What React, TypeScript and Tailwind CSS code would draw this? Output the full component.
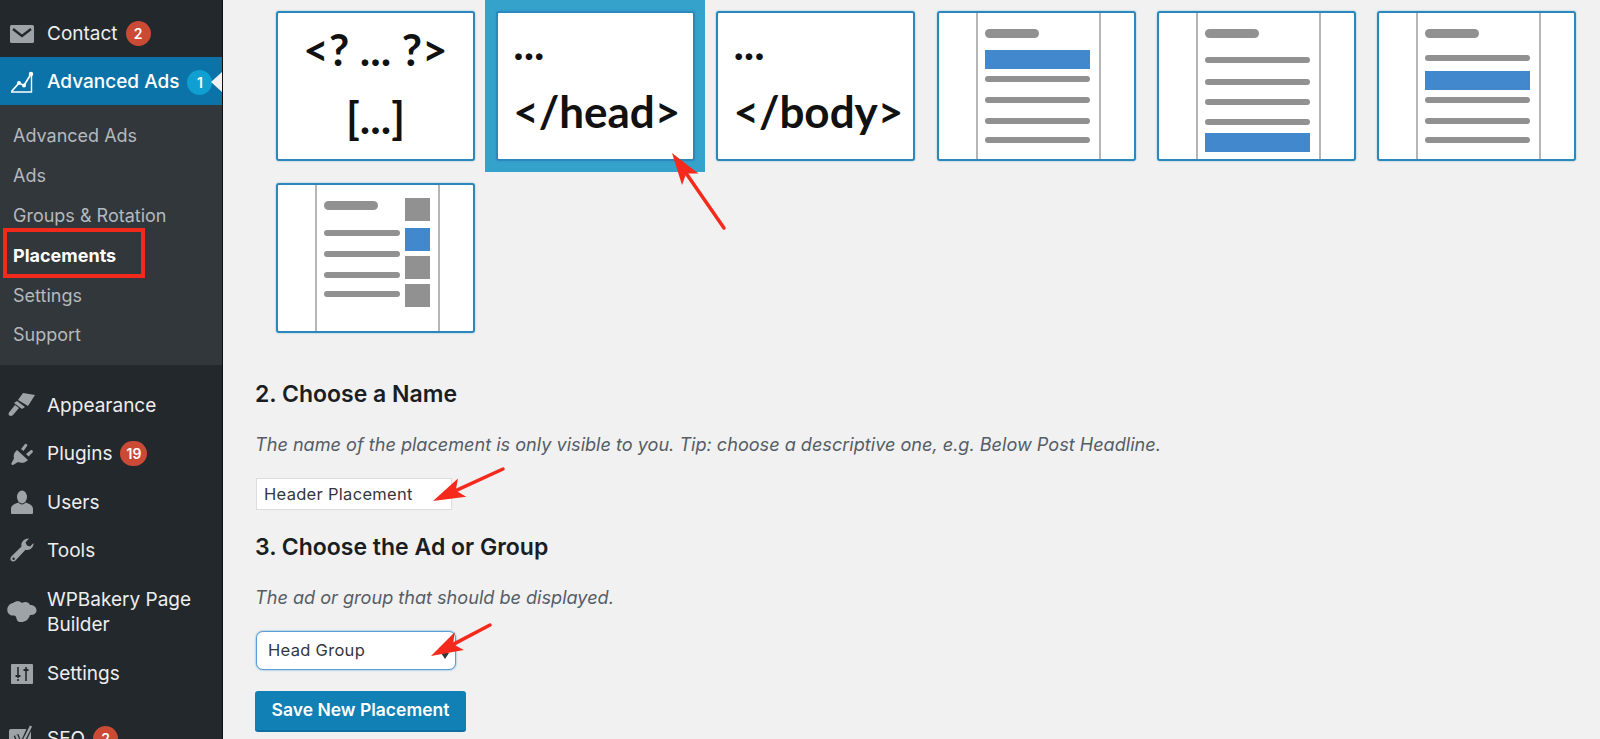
const SANS = "font-['Inter','Liberation_Sans',sans-serif]"

function Envelope() {
  return (
    <svg viewBox="0 0 24 18" className="w-6 h-[18px]">
      <rect x="0" y="0" width="24" height="18" rx="1.5" fill="#9ea3a8" />
      <path d="M3 4 L12 11 L21 4" fill="none" stroke="#23282d" strokeWidth="2.4" />
    </svg>
  )
}

function ChartIcon() {
  return (
    <svg viewBox="0 0 24 24" className="w-6 h-6" fill="none" stroke="#fff" strokeWidth="1.4">
      <path d="M21.5 3 V22 H1" />
      <path d="M1.5 21.5 L9 13 L14 15.5 L21 4" strokeWidth="1.7" />
      <circle cx="9" cy="13" r="1.3" fill="#fff" />
      <circle cx="14" cy="15.5" r="1.3" fill="#fff" />
      <circle cx="21" cy="4" r="1.5" fill="#fff" />
    </svg>
  )
}

function Brush() {
  return (
    <svg viewBox="0 0 28 24" className="w-7 h-6" fill="#9ea3a8">
      <path d="M15 0 L27 2 L20 13 L10 7 Z" />
      <path d="M9 8 L17 14 L14 16 L6 10 Z" />
      <path d="M7 12 L11 15 L5 22 C3.5 23.5 1 23 0.6 21.5 C0.3 20.5 1 19.4 1.6 18.8 Z" />
    </svg>
  )
}

function Plug() {
  return (
    <svg viewBox="0 0 24 24" className="w-6 h-6" fill="#9ea3a8">
      <path d="M7 8 L18 18 C15 21 11 21.5 8 20 L3 23 C1.5 23.3 1 22 1.5 21 L4 16.5 C3 13.5 4 10.5 7 8 Z" />
      <path d="M11 7 L15 2 C16 1 18 2.5 17 4 L13.5 9 Z" />
      <path d="M16 12 L21 8 C22.5 7.5 23.5 9.5 22.5 10.5 L18.5 14.5 Z" />
    </svg>
  )
}

function User() {
  return (
    <svg viewBox="0 0 22 24" className="w-[22px] h-6" fill="#9ea3a8">
      <ellipse cx="11" cy="7" rx="5" ry="6.5" />
      <path d="M0 19 C0 15 4 13.5 7.5 12.5 C9 15 13 15 14.5 12.5 C18 13.5 22 15 22 19 V23 C22 23.5 21.5 24 21 24 H1 C0.5 24 0 23.5 0 23 Z" />
    </svg>
  )
}

function Wrench() {
  return (
    <svg viewBox="0 0 24 24" className="w-6 h-6" fill="#9ea3a8">
      <path d="M23.5 5 C24 9 20 13 15.5 11.8 L5.5 22.5 C4 24 1 23.8 0.5 21.5 C0.2 20 1 19 1.8 18 L11.5 8.5 C10.5 4 14.5 0 19 0.5 L15.5 4.5 L17 7.5 L20 8.5 Z" />
      <circle cx="3.6" cy="20.8" r="1.2" fill="#23282d" />
    </svg>
  )
}

function Cloud() {
  return (
    <svg viewBox="0 0 30 22" className="w-[30px] h-[22px]" fill="#9ea3a8">
      <path d="M6 2 C9 -0.5 13 0 15 2 C18 0 22 1 23 4 C26 3.5 30 6 29.5 10 C29 13 26 14.5 23 14 C22 17 20 20 17 20.5 C15 21.5 11 21.5 10 19 C9 16.5 9.5 15 7 14.5 C3 15 0 12 0.3 8.5 C0.5 5 3 2.5 6 2 Z" />
    </svg>
  )
}

function Sliders() {
  return (
    <svg viewBox="0 0 22 20" className="w-[22px] h-5">
      <rect width="22" height="20" rx="1" fill="#9ea3a8" />
      <path d="M7 3 V14 M7 17 V15 M15 17 V7 M15 3 V5" stroke="#23282d" strokeWidth="1.6" />
      <path d="M4.5 12 H9.5 M12.5 6 H17.5" stroke="#23282d" strokeWidth="1.8" />
    </svg>
  )
}

function Seo() {
  return (
    <svg viewBox="0 0 26 26" className="w-[26px] h-[26px]">
      <rect x="0" y="4" width="22" height="22" rx="2" fill="#9ea3a8" />
      <path d="M7 10 L12 22 L22 0" fill="none" stroke="#23282d" strokeWidth="5" />
      <path d="M7 10 L12 21 L22 1" fill="none" stroke="#9ea3a8" strokeWidth="2.4" />
    </svg>
  )
}

function Badge({ n, color = 'bg-[#ca4a36]' }: { n: string; color?: string }) {
  return (
    <span className={`ml-2 h-[25px] min-w-[25px] px-[6px] rounded-full ${color} text-white text-[14px] font-semibold flex items-center justify-center`}>
      {n}
    </span>
  )
}

function MenuItem({ icon, label, badge, className = 'h-12' }: { icon: React.ReactNode; label: React.ReactNode; badge?: string; className?: string }) {
  return (
    <div className={`flex items-center text-[#eeeeee] text-[19px] leading-[25px] ${className}`}>
      <div className="w-[47px] shrink-0 flex justify-center pr-[3px]">{icon}</div>
      <span>{label}</span>
      {badge && <Badge n={badge} />}
    </div>
  )
}

function SubItem({ label, active }: { label: string; active?: boolean }) {
  return (
    <div className={`h-[39.8px] pl-[13px] flex items-center text-[18px] ${active ? 'text-white font-bold' : 'text-[#b4b9be]'}`}>
      {label}
    </div>
  )
}

function Sidebar() {
  return (
    <aside className="w-[223px] shrink-0 h-[739px] overflow-hidden bg-[#23282d] border-r border-[#111]">
      <MenuItem icon={<Envelope />} label="Contact" badge="2" className="h-[57px] pt-[10px]" />
      <div className="relative h-12 pt-[2px] bg-[#0c73a8] flex items-center text-white text-[19px] font-medium">
        <div className="w-[47px] shrink-0 flex justify-center pr-[3px]"><ChartIcon /></div>
        <span>Advanced Ads</span>
        <Badge n="1" color="bg-[#0f9fd0]" />
        <span className="absolute right-0 top-[15px] w-0 h-0 border-y-[10px] border-y-transparent border-r-[11px] border-r-[#f1f1f1]" />
      </div>
      <div className="relative h-[260px] bg-[#32373c] pt-[11px]">
        <SubItem label="Advanced Ads" />
        <SubItem label="Ads" />
        <SubItem label="Groups & Rotation" />
        <SubItem label="Placements" active />
        <SubItem label="Settings" />
        <SubItem label="Support" />
        <div className="absolute left-[3px] top-[123px] w-[142px] h-[50px] border-[4px] border-[#f22a1b]" />
      </div>
      <div className="h-4" />
      <MenuItem icon={<Brush />} label="Appearance" />
      <MenuItem icon={<Plug />} label="Plugins" badge="19" className="h-[49px]" />
      <MenuItem icon={<User />} label="Users" />
      <MenuItem icon={<Wrench />} label="Tools" />
      <MenuItem icon={<Cloud />} label={<>WPBakery Page<br />Builder</>} className="h-[75px] items-center" />
      <MenuItem icon={<Sliders />} label="Settings" className="h-[49px]" />
      <MenuItem icon={<Seo />} label="SEO" badge="2" className="h-8 mt-[24px]" />
    </aside>
  )
}

function Thumb({ children }: { children: React.ReactNode }) {
  return (
    <div className="h-[150px] rounded-[3px] bg-white border-2 border-[#2a88bd] shadow-[0_0_2px_rgba(42,136,189,0.5)] overflow-hidden">
      {children}
    </div>
  )
}

function Line({ className = '' }: { className?: string }) {
  return <div className={`h-[6px] rounded-full bg-[#919191] ${className}`} />
}

function Blue({ className = '' }: { className?: string }) {
  return <div className={`h-[19px] bg-[#4288cc] ${className}`} />
}

function Column({ children, className = '' }: { children: React.ReactNode; className?: string }) {
  return (
    <div className={`h-full ml-[37px] mr-[33px] border-x-2 border-[#b5b5b5] pl-[7px] pr-[9px] pt-[16px] ${className}`}>
      {children}
    </div>
  )
}

function Pill({ className = '' }: { className?: string }) {
  return <div className={`w-[54px] h-[9px] rounded-full bg-[#919191] ${className}`} />
}

function SidebarThumb() {
  return (
    <Column className="flex gap-[5px] !pt-0 !pr-0">
      <div className="w-[76px] pt-[16px]">
        <Pill />
        <Line className="mt-[20px]" />
        <Line className="mt-[15px]" />
        <Line className="mt-[15px]" />
        <Line className="mt-[13px]" />
      </div>
      <div className="pt-[13px]">
        <div className="w-[25px] h-[23px] bg-[#919191]" />
        <div className="w-[25px] h-[23px] bg-[#4288cc] mt-[7px]" />
        <div className="w-[25px] h-[23px] bg-[#919191] mt-[5px]" />
        <div className="w-[25px] h-[23px] bg-[#919191] mt-[5px]" />
      </div>
    </Column>
  )
}

function CodeThumb({ top, bottom, center }: { top: string; bottom: string; center?: boolean }) {
  return (
    <div className={`h-full font-['Lato',sans-serif] font-bold text-[#111] text-[44px] leading-[50px] whitespace-nowrap ${center ? 'text-center pt-[11px]' : 'pl-[15px] pt-[5px]'}`}>
      <div>{top}</div>
      <div className="mt-[18px]">{bottom}</div>
    </div>
  )
}

function Arrow({ x1, y1, x2, y2 }: { x1: number; y1: number; x2: number; y2: number }) {
  const a = Math.atan2(y2 - y1, x2 - x1)
  const len = 32
  const wing = 10
  const bx = x2 - Math.cos(a) * len
  const by = y2 - Math.sin(a) * len
  const nx = -Math.sin(a)
  const ny = Math.cos(a)
  const notchX = x2 - Math.cos(a) * (len - 7)
  const notchY = y2 - Math.sin(a) * (len - 7)
  return (
    <g fill="#f52a1c" stroke="none">
      <line x1={x1} y1={y1} x2={notchX} y2={notchY} stroke="#f52a1c" strokeWidth="3.5" strokeLinecap="round" />
      <polygon points={`${x2},${y2} ${bx + nx * wing},${by + ny * wing} ${notchX},${notchY} ${bx - nx * wing},${by - ny * wing}`} />
    </g>
  )
}

export default function App() {
  return (
    <div className={`relative w-[1600px] h-[739px] overflow-hidden flex bg-[#f1f1f1] ${SANS}`}>
      <Sidebar />
      <main className="flex-1 min-w-0 pl-[32px]">
        <div className="grid grid-cols-[repeat(6,220.2px)] grid-rows-[172px_170px] ml-[10px] w-[1322px]">
          <div className="p-[11px] pr-[10.2px]"><Thumb><CodeThumb top="<? ... ?>" bottom="[...]" center /></Thumb></div>
          <div className="p-[11px] pr-[10.2px] bg-[#35a2cb]"><Thumb><CodeThumb top="..." bottom="</head>" /></Thumb></div>
          <div className="p-[11px] pr-[10.2px]"><Thumb><CodeThumb top="..." bottom="</body>" /></Thumb></div>
          <div className="p-[11px] pr-[10.2px]">
            <Thumb>
              <Column>
                <Pill />
                <Blue className="mt-[12px]" />
                <Line className="mt-[7px]" />
                <Line className="mt-[15px]" />
                <Line className="mt-[15px]" />
                <Line className="mt-[13px]" />
              </Column>
            </Thumb>
          </div>
          <div className="p-[11px] pr-[10.2px]">
            <Thumb>
              <Column>
                <Pill />
                <Line className="mt-[19px]" />
                <Line className="mt-[16px]" />
                <Line className="mt-[14px]" />
                <Line className="mt-[14px]" />
                <Blue className="mt-[8px]" />
              </Column>
            </Thumb>
          </div>
          <div className="p-[11px] pr-[10.2px]">
            <Thumb>
              <Column>
                <Pill />
                <Line className="mt-[17px]" />
                <Blue className="mt-[10px]" />
                <Line className="mt-[7px]" />
                <Line className="mt-[15px]" />
                <Line className="mt-[13px]" />
              </Column>
            </Thumb>
          </div>
          <div className="p-[11px] pr-[10.2px]"><Thumb><SidebarThumb /></Thumb></div>
        </div>

        <h2 className="mt-[37px] text-[23px] leading-[30px] font-semibold text-[#191e23]">2. Choose a Name</h2>
        <p className="mt-[23px] text-[18.1px] leading-[24px] italic text-[#555d66]">
          The name of the placement is only visible to you. Tip: choose a descriptive one, e.g. Below Post Headline.
        </p>
        <input
          readOnly
          value="Header Placement"
          className="block mt-[22px] ml-px w-[196px] h-[32px] px-[7px] bg-white border border-[#dddddd] text-[16.5px] tracking-[0.3px] text-[#32373c] outline-none"
        />
        <h2 className="mt-[22px] text-[23px] leading-[30px] font-semibold text-[#191e23]">3. Choose the Ad or Group</h2>
        <p className="mt-[23px] text-[18.1px] leading-[24px] italic text-[#555d66]">The ad or group that should be displayed.</p>
        <div className="relative mt-[22px] ml-px w-[200px] h-[39px] pl-[11px] flex items-center bg-white rounded-[7px] border border-[#5b9dd9] shadow-[0_0_2px_rgba(30,140,190,0.8)] text-[16.5px] tracking-[0.3px] text-[#32373c]">
          Head Group
          <span className="absolute right-[6px] top-[21px] w-0 h-0 border-x-[4px] border-x-transparent border-t-[6px] border-t-[#32373c]" />
        </div>
        <button className="block mt-[21px] w-[211px] h-[41px] rounded-[3px] bg-[#1180b5] border-b-2 border-[#0c6f9f] text-white text-[17.5px] font-semibold">
          Save New Placement
        </button>
      </main>

      {/* red annotation arrows drawn over the page */}
      <svg className="absolute inset-0 pointer-events-none" width="1600" height="739">
        <Arrow x1={724} y1={228} x2={672} y2={153} />
        <Arrow x1={503} y1={469} x2={433} y2={501} />
        <Arrow x1={490} y1={625} x2={431} y2={656} />
      </svg>
    </div>
  )
}
